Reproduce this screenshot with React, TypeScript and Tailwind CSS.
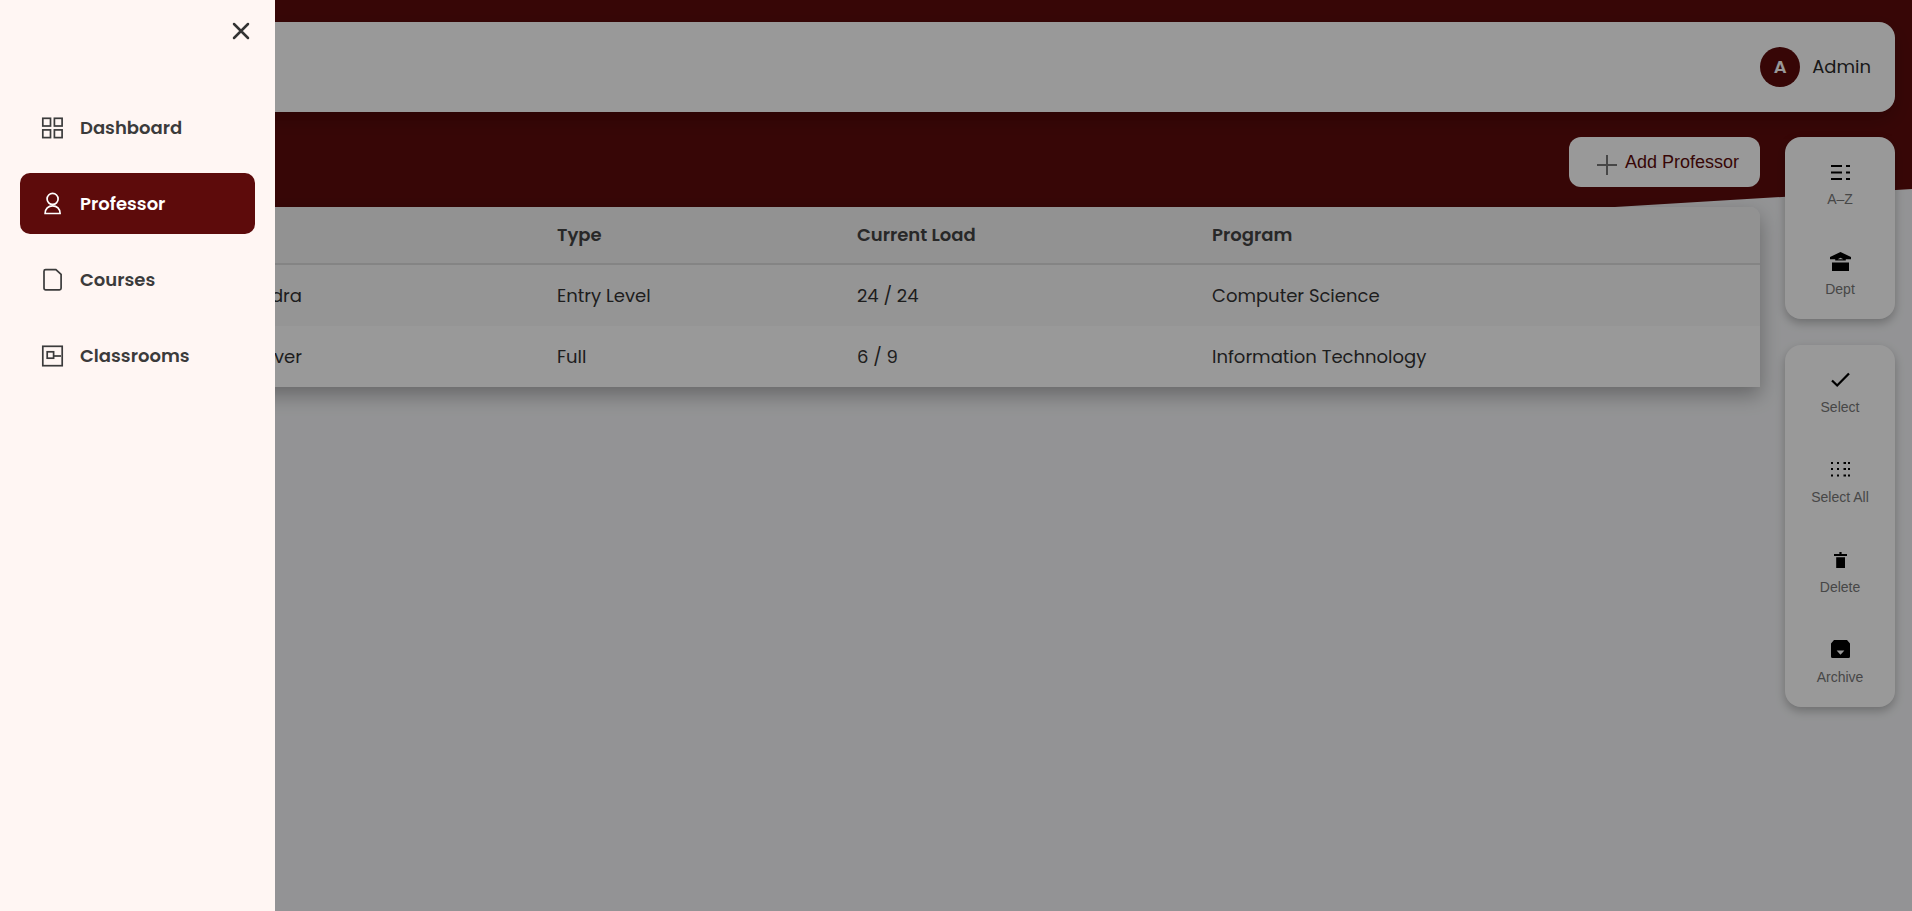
import type { ReactNode } from "react";

type NavItem = { label: string; icon: ReactNode; active?: boolean };
type Action = { label: string; icon: ReactNode };
type Professor = { name: string; type: string; load: string; program: string };

const NAV_ITEMS: NavItem[] = [
  {
    label: "Dashboard",
    icon: (
      <g>
        <rect x="2.8" y="2.3" width="7.7" height="7.7" />
        <rect x="14.4" y="2.3" width="7.7" height="7.7" />
        <rect x="2.8" y="13.9" width="7.7" height="7.7" />
        <rect x="14.4" y="13.9" width="7.7" height="7.7" />
      </g>
    ),
  },
  {
    label: "Professor",
    active: true,
    icon: (
      <g>
        <circle cx="12.6" cy="6.9" r="5.5" />
        <path d="M5.1 21.5C5.1 16.800 8.300 13.800 12.600 13.800s7.500 3 7.500 7.700z" />
      </g>
    ),
  },
  {
    label: "Courses",
    icon: <path d="M5.6 1.7h10.300l5.200 4.600v14a1.600 1.600 0 0 1-1.600 1.600H5.600a1.600 1.600 0 0 1-1.600-1.600V3.300a1.600 1.600 0 0 1 1.600-1.600z" />,
  },
  {
    label: "Classrooms",
    icon: (
      <g>
        <rect x="2.8" y="2.3" width="19.4" height="19.4" />
        <rect x="7.2" y="7.8" width="6.4" height="6.4" />
        <path d="M13.6 12H21" />
      </g>
    ),
  },
];

const SORT_ACTIONS: Action[] = [
  {
    label: "A–Z",
    icon: <path d="M3 5h11v2H3zM18 5h4v2h-4zM3 11.5h11v2H3zM18 11.5h4v2h-4zM3 18h11v2H3zM18 18h4v2h-4z" />,
  },
  {
    label: "Dept",
    icon: (
      <path
        fillRule="evenodd"
        d="M12.5 2 23 7v2.3h-5.2v1.2H7.200V9.300H2V7zM9.700 9.300h5.600l-2.800-1.500zM4 12.500h17V21H4z"
      />
    ),
  },
];

const ROW_ACTIONS: Action[] = [
  {
    label: "Select",
    icon: <path d="M4 12.5l5.200 5L21 5.500" fill="none" stroke="currentColor" strokeWidth="2.3" />,
  },
  {
    label: "Select All",
    icon: (
      <path d="M3 4h2v2H3zM9 4h2v2H9zM15.5 4H18v2h-2.500zM20 4h2v2h-2zM3 10h2v2H3zM9 10h2v2H9zM15.500 10H18v2h-2.500zM20 10h2v2h-2zM3 16.500h2v2H3zM9 16.500h2v2H9zM15.500 16.500H18v2h-2.500zM20 16.500h2v2h-2z" />
    ),
  },
  {
    label: "Delete",
    icon: <path d="M11.4 4h2.200v2H19v2H6V6h5.400zM8.200 9.200h8.800V20H8.200z" />,
  },
  {
    label: "Archive",
    icon: (
      <path
        fillRule="evenodd"
        d="M6 2h13l3 3.400V18.500a1.500 1.500 0 0 1-1.500 1.500h-16A1.500 1.500 0 0 1 3 18.500V5.400zM8.600 12.600l3.900 4.200 3.900-4.200z"
      />
    ),
  },
];

const PROFESSORS: Professor[] = [
  { name: "Sandra", type: "Entry Level", load: "24 / 24", program: "Computer Science" },
  { name: "Oliver", type: "Full", load: "6 / 9", program: "Information Technology" },
];

function Sidebar() {
  return (
    <aside className="fixed inset-y-0 left-0 z-20 w-[275px] bg-[#fff6f3] px-5 text-[#3b3b3b]">
      <div className="flex h-[97px] justify-end pt-[19px]">
        <button type="button" aria-label="Close menu" className="mr-[2px] h-6 w-6">
          <svg viewBox="0 0 24 24" className="h-6 w-6" fill="none" stroke="#333" strokeWidth="2.5" strokeLinecap="round">
            <path d="M5 5l14 14M19 5 5 19" />
          </svg>
        </button>
      </div>
      <nav className="flex flex-col gap-[15px]">
        {NAV_ITEMS.map((item) => (
          <a
            key={item.label}
            href="#"
            aria-current={item.active ? "page" : undefined}
            className={
              item.active
                ? "flex h-[61px] items-center gap-4 rounded-[10px] bg-[#5d0b0b] pl-5 text-lg font-semibold text-white"
                : "flex h-[61px] items-center gap-4 rounded-[10px] pl-5 text-lg font-semibold"
            }
          >
            <svg viewBox="0 0 24 24" className="h-6 w-6" fill="none" stroke="currentColor" strokeWidth="1.7">
              {item.icon}
            </svg>
            {item.label}
          </a>
        ))}
      </nav>
    </aside>
  );
}

function ActionPanel({ actions }: { actions: Action[] }) {
  return (
    <div className="flex flex-col rounded-2xl bg-white py-px shadow-[0_4px_10px_rgba(0,0,0,0.25)]">
      {actions.map((action) => (
        <button
          key={action.label}
          type="button"
          className="flex h-[90px] flex-col items-center gap-[5px] pt-[22px] font-['Liberation_Sans',sans-serif] text-sm text-[#777]"
        >
          <svg viewBox="0 0 24 24" className="h-6 w-6 text-black" fill="currentColor">
            {action.icon}
          </svg>
          {action.label}
        </button>
      ))}
    </div>
  );
}

function ProfessorTable() {
  return (
    <table className="w-full table-fixed border-separate border-spacing-0 overflow-hidden rounded-t-[10px] bg-white text-left text-lg text-[#333] shadow-[0_8px_20px_rgba(0,0,0,0.3)]">
      <thead>
        <tr className="h-[58px] bg-[#f3f3f3] text-[#444]">
          <th className="w-[520px] border-b-2 border-[#ddd] px-5 font-semibold">Name</th>
          <th className="w-[300px] border-b-2 border-[#ddd] px-5 font-semibold">Type</th>
          <th className="w-[355px] border-b-2 border-[#ddd] px-5 font-semibold">Current Load</th>
          <th className="border-b-2 border-[#ddd] px-5 font-semibold">Program</th>
        </tr>
      </thead>
      <tbody>
        {PROFESSORS.map((professor) => (
          <tr key={professor.name} className="h-[61px] odd:bg-[#f9f9f9]">
            <td className="pr-[235px] text-right">{professor.name}</td>
            <td className="px-5">{professor.type}</td>
            <td className="px-5">{professor.load}</td>
            <td className="px-5">{professor.program}</td>
          </tr>
        ))}
      </tbody>
    </table>
  );
}

export default function App() {
  return (
    <div className="relative min-h-screen bg-[#f5f6f8] font-['Poppins','Inter',sans-serif]">
      <div className="absolute inset-x-0 top-0 h-[305px] bg-[#5d0b0b] [clip-path:polygon(0_0,100%_0,100%_62%,0_100%)]" />
      <div className="relative flex flex-col gap-[25px] px-[17px] pt-[22px]">
        <header className="flex h-[90px] items-center justify-end gap-3 rounded-2xl bg-white pr-6 shadow-[0_8px_20px_rgba(0,0,0,0.2)]">
          <span className="flex h-10 w-10 items-center justify-center rounded-full bg-[#5d0b0b] text-lg font-semibold text-white">
            A
          </span>
          <span className="text-lg text-[#2b2b2b]">Admin</span>
        </header>
        <div className="flex items-start gap-[25px]">
          <main className="flex min-w-0 flex-1 flex-col gap-5">
            <button
              type="button"
              className="flex h-[50px] items-center gap-2 self-end rounded-xl bg-white pr-[21px] pl-6 font-['Liberation_Sans',sans-serif] text-lg text-[#5d0b0b]"
            >
              <svg viewBox="0 0 24 24" className="mt-1 h-6 w-6" fill="none" stroke="#777" strokeWidth="2">
                <path d="M14 3v20M4 13h20" />
              </svg>
              <span>Add Professor</span>
            </button>
            <ProfessorTable />
          </main>
          <div className="flex w-[110px] flex-col gap-[26px]">
            <ActionPanel actions={SORT_ACTIONS} />
            <ActionPanel actions={ROW_ACTIONS} />
          </div>
        </div>
      </div>
      <div className="fixed inset-0 z-10 bg-black/40" />
      <Sidebar />
    </div>
  );
}
